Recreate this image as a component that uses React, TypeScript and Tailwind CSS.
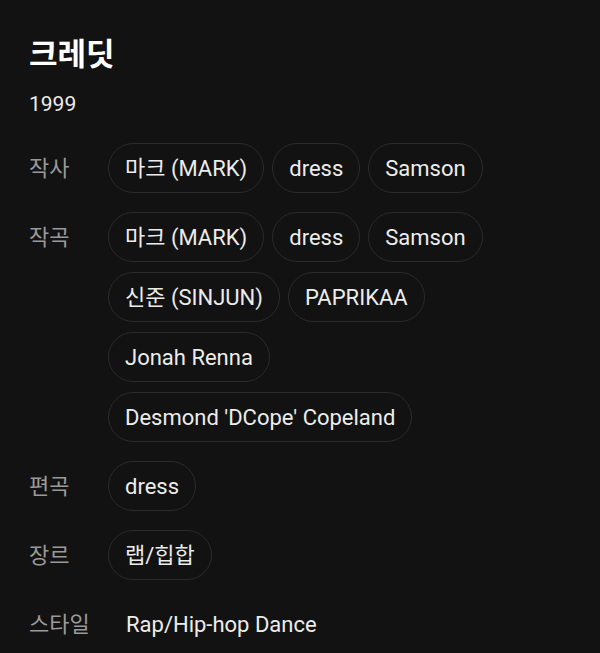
import React from "react";

const font = { fontFamily: 'Roboto, "Noto Sans CJK KR", sans-serif' };

function Chip({ children }: { children: React.ReactNode }) {
  return (
    <div className="h-[50px] px-4 rounded-full border border-[#2b2b2b] flex items-center text-[22px] text-[#ececec] whitespace-nowrap">
      {children}
    </div>
  );
}

function Row({ label, children }: { label: string; children: React.ReactNode }) {
  return (
    <div className="flex items-start">
      <div className="w-[79px] shrink-0 h-[50px] flex items-center text-[22px] text-[#9a9a9a]">{label}</div>
      <div className="flex flex-wrap gap-x-[8px] gap-y-[10px] w-[390px]">{children}</div>
    </div>
  );
}

export default function App() {
  return (
    <div className="min-h-[653px] w-[600px] bg-[#121212] pl-[29px] pt-[37px]" style={font}>
      <div className="h-[36px] leading-[36px] text-[31px] font-bold text-white">크레딧</div>
      <div className="mt-[19px] h-[24px] leading-[24px] text-[21px] text-[#ececec]">1999</div>
      <div className="mt-[27px] flex flex-col gap-[19px]">
        <Row label="작사">
          <Chip>마크 (MARK)</Chip>
          <Chip>dress</Chip>
          <Chip>Samson</Chip>
        </Row>
        <Row label="작곡">
          <Chip>마크 (MARK)</Chip>
          <Chip>dress</Chip>
          <Chip>Samson</Chip>
          <Chip>신준 (SINJUN)</Chip>
          <Chip>PAPRIKAA</Chip>
          <div className="w-full flex flex-col gap-[10px] items-start">
            <Chip>Jonah Renna</Chip>
            <Chip>Desmond 'DCope' Copeland</Chip>
          </div>
        </Row>
        <Row label="편곡">
          <Chip>dress</Chip>
        </Row>
        <Row label="장르">
          <Chip>랩/힙합</Chip>
        </Row>
        <Row label="스타일">
          <div className="h-[50px] pl-[18px] flex items-center text-[22px] text-[#ececec]">Rap/Hip-hop Dance</div>
        </Row>
      </div>
    </div>
  );
}
